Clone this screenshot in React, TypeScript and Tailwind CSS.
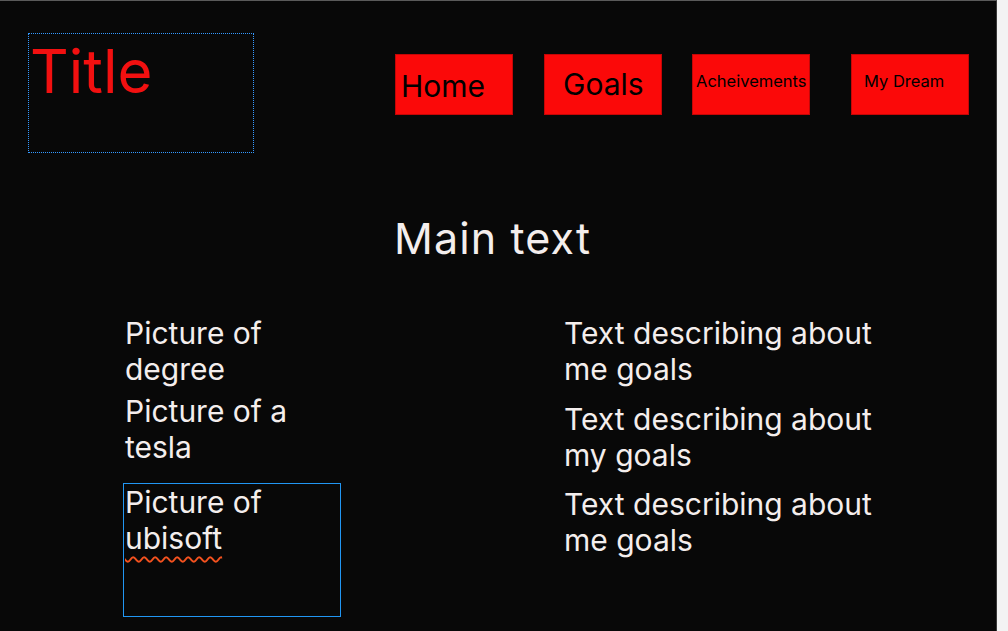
import React from "react";

const navBtn = "h-[61px] w-[118px] shrink-0 bg-[#fb0909] border border-[#c40606] text-black leading-none";

export default function App() {
  return (
    <div className="w-[1008px] h-[631px] bg-[#f3f3f3] overflow-hidden flex" style={{ fontFamily: "Inter, 'Noto Sans', sans-serif" }}>
      <div className="w-[997px] h-[631px] shrink-0 bg-[#080808] border-t border-t-[#5a5a5a] border-r border-r-[#3a3a3a] flex flex-col">
        {/* Header */}
        <div className="flex items-start pt-[32px]">
          <div className="ml-[28px] w-[226px] h-[120px] shrink-0 border border-dotted border-[#3399ff] pl-[1px] pt-[7px]">
            <div className="text-[60px] leading-none text-[#f21010]">Title</div>
          </div>
          <nav className="flex items-start mt-[21px] ml-[141px]">
            <div className={`${navBtn} text-[30px] pl-[5px] pt-[16px]`}>Home</div>
            <div className={`${navBtn} ml-[31px] text-[30px] pl-[18px] pt-[14px]`}>Goals</div>
            <div className={`${navBtn} ml-[30px] text-[16.5px] pl-[3px] pt-[18px]`}>Acheivements</div>
            <div className={`${navBtn} ml-[41px] text-[16.5px] pl-[12px] pt-[18px]`}>My Dream</div>
          </nav>
        </div>

        {/* Main text */}
        <div className="mt-[64px] pl-[394px] text-[43px] leading-none tracking-[0.026em] text-[#f4eeed]">Main text</div>

        {/* Columns */}
        <div className="flex items-start mt-[55px] text-[30px] leading-[36px] text-[#f4eeed]">
          <div className="ml-[123px] w-[218px] shrink-0 flex flex-col">
            <div className="pl-[2px]">Picture of<br />degree</div>
            <div className="mt-[6px] pl-[2px]">Picture of a<br />tesla</div>
            <div className="mt-[18px] h-[134px] border border-[#2196f3] pl-[1px]">
              Picture of<br />
              <span className="underline decoration-wavy decoration-[#f4511e] decoration-[1.5px] underline-offset-[7px]">ubisoft</span>
            </div>
          </div>
          <div className="ml-[223px] flex flex-col">
            <div>Text describing about<br />me goals</div>
            <div className="mt-[14px]">Text describing about<br />my goals</div>
            <div className="mt-[13px]">Text describing about<br />me goals</div>
          </div>
        </div>
      </div>
    </div>
  );
}
